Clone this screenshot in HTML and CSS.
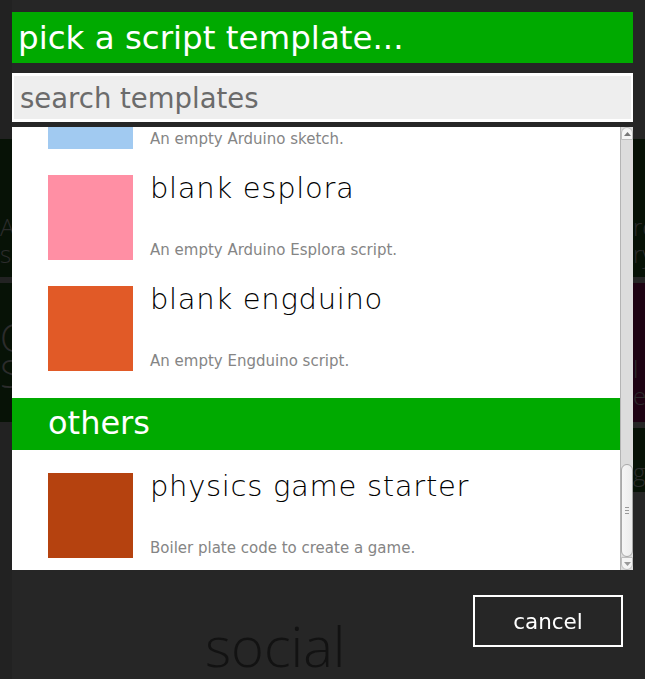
FILE: index.html
```html
<!DOCTYPE html>
<html lang="en">
<head>
    <meta charset="UTF-8">
    <meta name="viewport" content="width=device-width, initial-scale=1.0">
    <link rel="stylesheet" href="styles.css">
    <title>pick a script template</title>
</head>
<body>

    <!-- hub page behind the dialog, only its edges are visible -->
    <div class="hub">
        <div class="hub-side hub-left">
            <div class="tile tile-green"><span class="tile-text">A<br>sc</span></div>
            <div class="tile tile-green tile-big"><span class="tile-text">C<br>S</span></div>
        </div>
        <div class="hub-middle">
            <div class="hub-heading">social</div>
        </div>
        <div class="hub-side hub-right">
            <div class="tile tile-green"><span class="tile-text">ro<br>ry</span></div>
            <div class="tile tile-purple"><span class="tile-text">l<br>e</span></div>
            <div class="tile tile-green tile-short"><span class="tile-text">gs</span></div>
        </div>
    </div>

    <!-- template picker -->
    <div class="modal">
        <div class="panel">
            <div class="panel-title">pick a script template...</div>
            <div class="search">
                <input class="search-input" type="text" placeholder="search templates">
            </div>
            <div class="list-wrap">
                <div class="list">
                    <div class="template first">
                        <div class="swatch" style="background:#a1caf1"></div>
                        <div class="template-info">
                            <div class="template-name">blank arduino</div>
                            <div class="template-desc">An empty Arduino sketch.</div>
                        </div>
                    </div>
                    <div class="template">
                        <div class="swatch" style="background:#ff8fa4"></div>
                        <div class="template-info">
                            <div class="template-name">blank esplora</div>
                            <div class="template-desc">An empty Arduino Esplora script.</div>
                        </div>
                    </div>
                    <div class="template">
                        <div class="swatch" style="background:#e15a27"></div>
                        <div class="template-info">
                            <div class="template-name">blank engduino</div>
                            <div class="template-desc">An empty Engduino script.</div>
                        </div>
                    </div>

                    <div class="group-header">others</div>

                    <div class="template">
                        <div class="swatch" style="background:#b5420f"></div>
                        <div class="template-info">
                            <div class="template-name">physics game starter</div>
                            <div class="template-desc">Boiler plate code to create a game.</div>
                        </div>
                    </div>
                </div>

                <!-- scrollbar (list is scrolled to the end) -->
                <div class="scrollbar">
                    <div class="sb-button sb-up">
                        <svg width="7" height="4" viewBox="0 0 7 4"><path d="M0 4 L3.5 0 L7 4 Z" fill="#777"/></svg>
                    </div>
                    <div class="sb-track">
                        <div class="sb-thumb">
                            <span class="sb-grip"></span>
                        </div>
                    </div>
                    <div class="sb-button sb-down">
                        <svg width="7" height="4" viewBox="0 0 7 4"><path d="M0 0 L3.5 4 L7 0 Z" fill="#999"/></svg>
                    </div>
                </div>
            </div>
        </div>
        <div class="modal-buttons">
            <button class="btn-cancel">cancel</button>
        </div>
    </div>

</body>
</html>
```

FILE: styles.css
```css
/* page */
html, body {
    margin: 0;
    height: 100%;
}

body {
    background-color: #262626;
    font-family: "DejaVu Sans", "Liberation Sans", sans-serif;
    overflow: hidden;
}

/* hub behind the dialog */
.hub {
    display: grid;
    grid-template-columns: 12px 1fr 12px;
    height: 100%;
}

.hub-side {
    display: flex;
    flex-direction: column;
    gap: 6px;
    padding-top: 139px;
    overflow: hidden;
    background-color: #222;
}

.hub-right {
    background-color: #262626;
}

.tile {
    height: 138px;
    box-sizing: border-box;
    padding-top: 74px;
    overflow: hidden;
}

.tile-green {
    background-color: #071206;
}

.tile-purple {
    background-color: #1e0313;
    height: 139px;
    padding-top: 72px;
}

.tile-big {
    height: 139px;
    padding-top: 36px;
}

.tile-big .tile-text {
    font-size: 38px;
    line-height: 36px;
}

.tile-short {
    height: 64px;
    padding-top: 30px;
}

.tile-text {
    display: block;
    font-family: "Open Sans", "DejaVu Sans", sans-serif;
    font-weight: 300;
    font-size: 24px;
    line-height: 27px;
    color: #2c2c2c;
}

.hub-middle {
    display: flex;
    flex-direction: column;
    justify-content: flex-end;
    padding-left: 193px;
}

.hub-heading {
    font-family: "Open Sans", "DejaVu Sans", sans-serif;
    font-weight: 300;
    font-size: 56px;
    line-height: 60px;
    color: #121212;
    margin-bottom: 4px;
}

/* dialog */
.modal {
    position: fixed;
    top: 0;
    left: 0;
    right: 0;
    bottom: 0;
    display: flex;
    flex-direction: column;
    padding: 12px;
}

.panel {
    display: flex;
    flex-direction: column;
    gap: 10px;
    background-color: #262626;
}

.panel-title {
    height: 51px;
    background-color: #00aa00;
    color: #fff;
    font-size: 32.5px;
    line-height: 52px;
    padding-left: 6px;
    white-space: nowrap;
}

.search {
    background-color: #fff;
    padding: 3px 2px;
}

.search-input {
    display: block;
    width: 100%;
    box-sizing: border-box;
    height: 43px;
    border: none;
    outline: none;
    background-color: #eeeeee;
    font-family: "DejaVu Sans", sans-serif;
    font-size: 27.5px;
    padding: 0 0 0 6px;
    color: #333;
}

.search-input::placeholder {
    color: #6b6b6b;
}

.list-wrap {
    display: flex;
    height: 443px;
    margin-top: -5px;
    background-color: #fff;
}

.list {
    flex: 1;
    overflow: hidden;
}

/* template rows */
.template {
    display: flex;
    padding: 23px 0 3px 36px;
}

.template.first {
    margin-top: -86px;
}

.swatch {
    width: 85px;
    height: 85px;
    flex-shrink: 0;
}

.template-info {
    display: flex;
    flex-direction: column;
    justify-content: space-between;
    margin-left: 17px;
}

.template-name {
    font-weight: 200;
    font-size: 29px;
    line-height: 26px;
    color: #000;
    white-space: nowrap;
    letter-spacing: 0.7px;
}

.template-desc {
    font-size: 15px;
    line-height: 20px;
    color: #858585;
    white-space: nowrap;
}

.group-header {
    margin-top: 24px;
    height: 52px;
    background-color: #00aa00;
    color: #fff;
    font-size: 32px;
    line-height: 50px;
    padding-left: 36px;
}

/* scrollbar */
.scrollbar {
    width: 13px;
    display: flex;
    flex-direction: column;
    background-color: #dcdcdc;
    border-left: 1px solid #b4b4b4;
    box-sizing: border-box;
}

.sb-button {
    height: 13px;
    display: flex;
    align-items: center;
    justify-content: center;
    background-color: #f4f4f4;
    border: 1px solid #bdbdbd;
    box-sizing: border-box;
}

.sb-up {
    border-radius: 6px 6px 0 0;
}

.sb-down {
    border-radius: 0 0 6px 6px;
}

.sb-track {
    flex: 1;
    display: flex;
    flex-direction: column;
    justify-content: flex-end;
}

.sb-thumb {
    height: 93px;
    display: flex;
    align-items: center;
    justify-content: center;
    background: linear-gradient(to right, #f6f6f6, #ececec);
    border: 1px solid #a9a9a9;
    border-radius: 6px;
    box-sizing: border-box;
}

.sb-grip {
    width: 4px;
    height: 7px;
    border-top: 1px solid #999;
    border-bottom: 1px solid #999;
    box-sizing: border-box;
    background: linear-gradient(#999, #999) center / 4px 1px no-repeat;
}

/* cancel */
.modal-buttons {
    display: flex;
    justify-content: flex-end;
    padding: 25px 10px 0 0;
}

.btn-cancel {
    width: 150px;
    height: 52px;
    background: transparent;
    border: 2px solid #fff;
    color: #fff;
    font-family: "DejaVu Sans", sans-serif;
    font-size: 21.5px;
    cursor: pointer;
}
```
